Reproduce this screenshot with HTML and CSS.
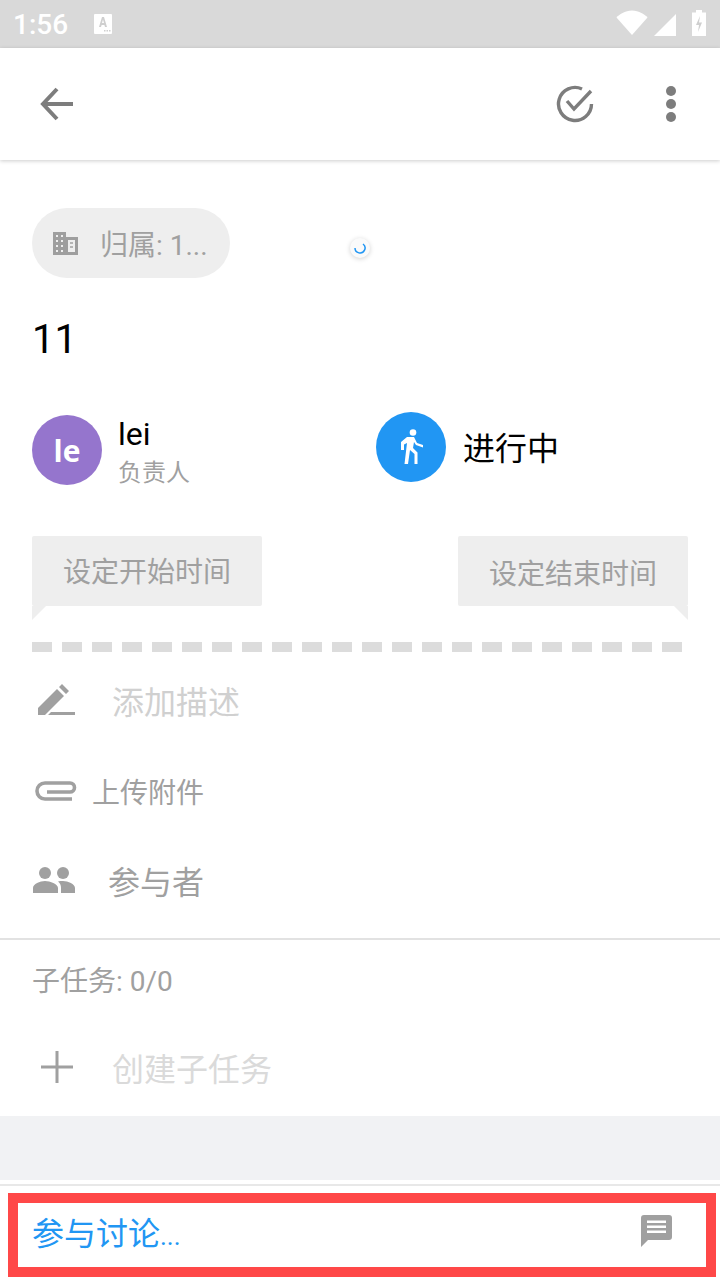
FILE: index.html
```html
<!DOCTYPE html>
<html lang="zh-CN">
<head>
  <meta charset="UTF-8" />
  <meta name="viewport" content="width=device-width, initial-scale=1.0"/>
  <title>任务详情</title>
  <link rel="stylesheet" href="styles.css">
</head>
<body>

  <!-- Android status bar -->
  <div class="status-bar">
    <span class="clock">1:56</span>
    <svg class="notif-icon" width="20" height="22" viewBox="0 0 20 22"><path fill="#fff" d="M2 1h16a1 1 0 0 1 1 1v18a1 1 0 0 1-1 1H2a1 1 0 0 1-1-1V2a1 1 0 0 1 1-1z"/><path fill="#cfcfcf" d="M9 4h2l3 10h-2l-.6-2H8.600L8 14H6zm1 2.500L9 10h2zM11 17h1.500v1.500H11zM13.500 17H15v1.500h-1.500zM16 17h1.500v1.500H16z"/></svg>
    <span class="status-right">
      <svg class="wifi" width="32" height="26" viewBox="0 0 32 26"><path fill="#fff" d="M16 25 .5 7.500C3 4.500 9 .5 16 .5s13 4 15.500 7z"/></svg>
      <svg class="signal" width="22" height="22" viewBox="0 0 22 22"><path fill="#fff" d="M22 0v22H0z"/></svg>
      <svg class="battery" width="14" height="26" viewBox="0 0 14 26"><path fill="#fff" d="M4 0h6v2.500h4V26H0V2.500h4z"/><path fill="#cfcfcf" d="M8 6 4 15h3l-1 7 4-9.500H7z"/></svg>
    </span>
  </div>

  <!-- Toolbar -->
  <header class="toolbar">
    <svg width="36" height="34" viewBox="0 0 36 34"><path fill="none" stroke="#7d7d7d" stroke-width="4" d="M34 17H5M18 2 4 17l14 15"/></svg>
    <span class="toolbar-right">
      <svg width="38" height="38" viewBox="0 0 38 38"><path fill="none" stroke="#7d7d7d" stroke-width="3.400" d="M35.500 19A16.500 16.500 0 1 1 26 4"/><path fill="none" stroke="#7d7d7d" stroke-width="3.400" d="m11 16 7 8L35 6"/></svg>
      <svg width="12" height="38" viewBox="0 0 12 38"><g fill="#7d7d7d"><circle cx="6" cy="6" r="5"/><circle cx="6" cy="19" r="5"/><circle cx="6" cy="32" r="5"/></g></svg>
    </span>
  </header>

  <main class="content">
    <div class="belong-pill">
      <svg width="25" height="23" viewBox="0 0 25 23"><path fill="#9e9e9e" fill-rule="evenodd" d="M0 0h13v5h12v18H0zM3 3v2h2V3zm5 0v2h2V3zM3 8v2h2V8zm5 0v2h2V8zM3 13v2h2v-2zm5 0v2h2v-2zM3 18v2h2v-2zm5 0v2h2v-2zm7-10v12h7V8z"/><path fill="#b4b4b4" d="M17 10h3v2h-3zm0 4h3v2h-3z"/></svg>
      <span>归属: 1...</span>
    </div>

    <div class="task-title">11</div>

    <div class="people-row">
      <div class="person">
        <div class="avatar">le</div>
        <div class="person-text">
          <div class="person-name">lei</div>
          <div class="person-role">负责人</div>
        </div>
      </div>
      <div class="state">
        <div class="state-icon">
          <svg width="24" height="36" viewBox="0 0 24 36"><circle cx="14" cy="3.500" r="3.300" fill="#fff"/><path fill="#fff" d="M8 8h7l3 6 6 2v2.500l-7-2.500-2-3-1 6 4.500 4.500V35h-3V25l-4.500-4L9 35H5.500L8 14l-3 1.500V21H2v-8z"/></svg>
        </div>
        <span class="state-label">进行中</span>
      </div>
    </div>

    <div class="date-row">
      <div class="date-flag flag-left">设定开始时间</div>
      <div class="date-flag flag-right">设定结束时间</div>
    </div>

    <div class="dashes"></div>

    <div class="item item-desc">
      <svg width="38" height="32" viewBox="0 0 38 32"><path fill="#a0a0a0" d="M0 24 19 5l7 7L7 31H0zM21 3l3-3 7 7-3 3zM13 28h24v3H10z"/></svg>
      <span>添加描述</span>
    </div>
    <div class="item item-upload">
      <svg width="42" height="20" viewBox="0 0 42 20"><path fill="none" stroke="#a0a0a0" stroke-width="3.600" d="M37 18H10a8 8 0 0 1 0-16h25a4.500 4.500 0 0 1 0 9H12"/></svg>
      <span>上传附件</span>
    </div>
    <div class="item item-people">
      <svg width="42" height="26" viewBox="0 0 42 26"><g fill="#a0a0a0"><circle cx="12" cy="6" r="6"/><circle cx="30" cy="6" r="6"/><path d="M0 26v-5c0-4 7-7 12-7s13 3 13 7v5zM28 26v-5c0-3-1-5-3-6.500 1.500-.5 3.500-.5 5-.5 5 0 12 3 12 7v5z"/></g></svg>
      <span>参与者</span>
    </div>

    <div class="subtask-head">子任务: 0/0</div>

    <div class="item item-create">
      <svg width="34" height="34" viewBox="0 0 34 34"><path fill="none" stroke="#a0a0a0" stroke-width="3" d="M17 1v32M1 17h32"/></svg>
      <span>创建子任务</span>
    </div>
  </main>

  <div class="gray-band"></div>

  <footer class="comment-wrap">
    <div class="comment-box">
      <span>参与讨论<span class="dots">...</span></span>
      <svg width="32" height="32" viewBox="0 0 32 32"><path fill="#a0a0a0" fill-rule="evenodd" d="M3 0h25a3 3 0 0 1 3 3v19a3 3 0 0 1-3 3H7l-7 7V3a3 3 0 0 1 3-3zM6 5.500V8h19V5.500zm0 5V13h19v-2.500zm0 5V18h19v-2.500z"/></svg>
    </div>
  </footer>

  <!-- loading spinner -->
  <div class="spinner">
    <svg width="12" height="12" viewBox="0 0 12 12"><path fill="none" stroke="#2196f3" stroke-width="1.500" d="M1 6a5 5 0 0 0 9.500 2.200A5 5 0 0 0 9 2"/></svg>
  </div>

</body>
</html>
```

FILE: styles.css
```css
* {
  box-sizing: border-box;
}

body {
  margin: 0;
  width: 720px;
  height: 1280px;
  overflow: hidden;
  position: relative;
  background: #fff;
  font-family: "Roboto", "Noto Sans CJK SC", sans-serif;
  display: flex;
  flex-direction: column;
}

svg {
  display: block;
  flex: none;
}

/* Status bar */
.status-bar {
  height: 48px;
  background: #d9d9d9;
  display: flex;
  align-items: center;
  padding: 0 14px 0 13px;
  color: #fff;
}

.clock {
  font-size: 28px;
  font-weight: 500;
  width: 80px;
}

.status-right {
  margin-left: auto;
  align-self: flex-start;
  display: flex;
  align-items: flex-end;
  height: 36px;
}

.wifi {
  margin-right: 6px;
}

.signal {
  margin-right: 16px;
}

/* Toolbar */
.toolbar {
  height: 112px;
  display: flex;
  align-items: center;
  justify-content: space-between;
  padding: 0 43px 0 39px;
  box-shadow: 0 1px 4px rgba(0,0,0,0.2);
}

.toolbar-right {
  display: flex;
  align-items: center;
  gap: 71px;
}

/* Main content */
.content {
  padding: 48px 32px 0;
  height: 956px;
}

.belong-pill {
  width: 198px;
  height: 70px;
  border-radius: 35px;
  background: #eee;
  display: flex;
  align-items: center;
  gap: 22px;
  padding-left: 21px;
  font-size: 28px;
  color: #a0a0a0;
}

.task-title {
  font-size: 40px;
  line-height: 48px;
  margin-top: 38px;
  color: #000;
}

.people-row {
  display: flex;
  align-items: center;
  margin-top: 46px;
  height: 76px;
}

.person {
  display: flex;
  align-items: center;
  gap: 16px;
  width: 344px;
  padding-top: 4px;
}

.avatar {
  width: 70px;
  height: 70px;
  border-radius: 50%;
  background: #9575cd;
  color: #fff;
  font-size: 30px;
  font-weight: 700;
  font-family: "Open Sans", sans-serif;
  display: flex;
  align-items: center;
  justify-content: center;
}

.person-text {
  padding-top: 8px;
}

.person-name {
  font-size: 32px;
  line-height: 38px;
  color: #000;
}

.person-role {
  font-size: 24px;
  line-height: 40px;
  color: #a0a0a0;
}

.state {
  display: flex;
  align-items: center;
  gap: 17px;
  padding-bottom: 2px;
}

.state-icon {
  width: 70px;
  height: 70px;
  border-radius: 50%;
  background: #2196f3;
  display: flex;
  align-items: center;
  justify-content: center;
}

.state-label {
  font-size: 32px;
  padding-bottom: 2px;
  color: #000;
}

/* Date flags */
.date-row {
  display: flex;
  justify-content: space-between;
  margin-top: 50px;
}

.date-flag {
  width: 230px;
  height: 70px;
  background: #eee;
  border-radius: 2px;
  font-size: 28px;
  color: #a0a0a0;
  line-height: 74px;
  text-align: center;
  position: relative;
}

.date-flag::after {
  content: "";
  position: absolute;
  top: 70px;
  width: 0;
  height: 0;
  border-top: 14px solid #eee;
}

.flag-left::after {
  left: 0;
  border-right: 14px solid transparent;
}

.flag-right {
  line-height: 78px;
}

.flag-right::after {
  right: 0;
  border-left: 14px solid transparent;
}

.dashes {
  height: 10px;
  width: 650px;
  margin-top: 36px;
  background: repeating-linear-gradient(90deg, #dcdcdc 0 20px, transparent 20px 30px);
}

/* Rows */
.item {
  display: flex;
  align-items: center;
  font-size: 32px;
  color: #a0a0a0;
}

.item-desc {
  height: 90px;
  margin-top: 3px;
  padding-left: 6px;
  gap: 36px;
  color: #d0d0d0;
}

.item-upload {
  height: 88px;
  margin-top: 2px;
  padding-left: 3px;
  gap: 15px;
  font-size: 28px;
}

.item-people {
  height: 90px;
  padding-left: 1px;
  gap: 33px;
  margin-bottom: 13px;
}

.subtask-head {
  margin: 0 -32px;
  padding: 22px 32px 0;
  height: 77px;
  border-top: 2px solid #e2e2e2;
  font-size: 28px;
  line-height: 40px;
  color: #a0a0a0;
}

.item-create {
  height: 104px;
  padding-left: 8px;
  gap: 38px;
  color: #dadada;
}

/* Bottom */
.gray-band {
  height: 64px;
  background: #f1f2f4;
  flex: none;
}

.comment-wrap {
  flex: none;
  margin-top: 4px;
  padding: 7px 4px 3px 8px;
  border-top: 2px solid #e8e8e8;
}

.comment-box {
  height: 84px;
  border: 10px solid #ff4848;
  display: flex;
  align-items: center;
  justify-content: space-between;
  padding: 0 33px 8px 14px;
  font-size: 32px;
  color: #2196f3;
}

.dots {
  font-size: 26px;
}

/* Floats over the page */
.spinner {
  position: absolute;
  left: 350px;
  top: 238px;
  width: 20px;
  height: 20px;
  border-radius: 50%;
  background: #fafafa;
  box-shadow: 0 1px 5px rgba(0,0,0,0.18);
  display: flex;
  align-items: center;
  justify-content: center;
}
```
